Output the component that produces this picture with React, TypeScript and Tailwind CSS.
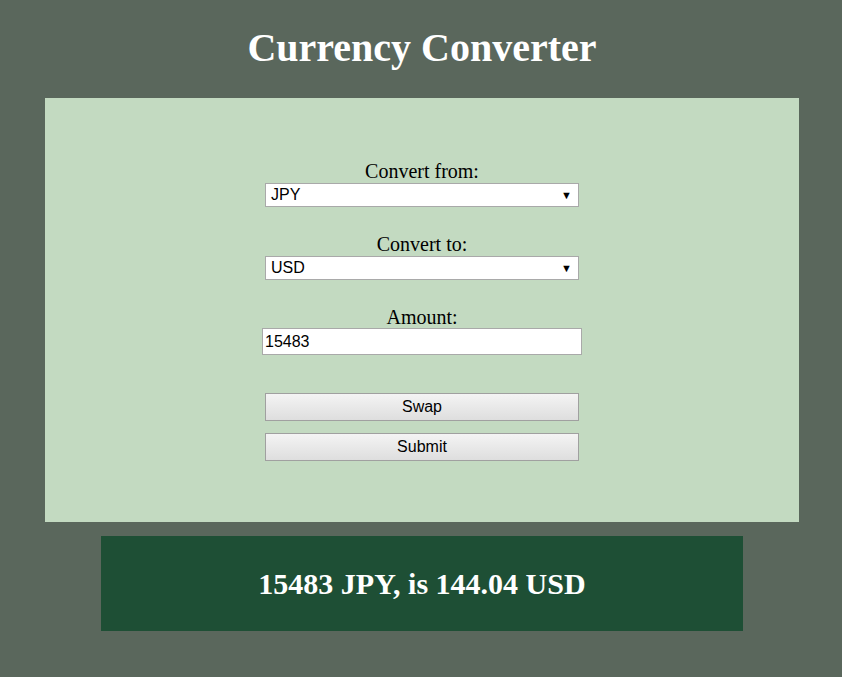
import React, { useState } from 'react';

export default function App() {
  const [from] = useState('JPY');
  const [to] = useState('USD');
  const [amount, setAmount] = useState('15483');

  return (
    <div className="min-h-[677px] bg-[#5a675c] pl-[2px] pt-[22px] pb-[46px]" style={{ fontFamily: '"Liberation Serif", serif' }}>
      <h1 className="text-center text-[40px] font-bold leading-[52px] text-white">Currency Converter</h1>

      <div className="mx-auto mt-[24px] h-[424px] w-[754px] bg-[#c3dac1] pt-[62px]">
        <div className="mx-auto flex w-[320px] flex-col items-center text-black">
          {/* Convert from */}
          <label className="text-[20px] leading-[22px]">Convert from:</label>
          <div className="mt-[1px] flex h-[24px] w-[314px] items-center justify-between border border-[#a9a9a9] bg-white pl-[5px] pr-[6px] text-[16px]" style={{ fontFamily: '"Liberation Sans", sans-serif' }}>
            <span>{from}</span>
            <span className="text-[11px]">▼</span>
          </div>

          {/* Convert to */}
          <label className="mt-[26px] text-[20px] leading-[22px]">Convert to:</label>
          <div className="mt-[1px] flex h-[24px] w-[314px] items-center justify-between border border-[#a9a9a9] bg-white pl-[5px] pr-[6px] text-[16px]" style={{ fontFamily: '"Liberation Sans", sans-serif' }}>
            <span>{to}</span>
            <span className="text-[11px]">▼</span>
          </div>

          {/* Amount */}
          <label className="mt-[26px] text-[20px] leading-[22px]">Amount:</label>
          <input
            value={amount}
            onChange={(e) => setAmount(e.target.value)}
            className="h-[27px] w-[320px] border border-[#a9a9a9] bg-white px-[2px] text-[16px] outline-none"
            style={{ fontFamily: '"Liberation Sans", sans-serif' }}
          />

          <button className="mt-[38px] h-[28px] w-[314px] border border-[#a0a0a0] bg-gradient-to-b from-[#f4f4f4] to-[#dedede] text-[16px]" style={{ fontFamily: '"Liberation Sans", sans-serif' }}>
            Swap
          </button>
          <button className="mt-[12px] h-[28px] w-[314px] border border-[#a0a0a0] bg-gradient-to-b from-[#f4f4f4] to-[#dedede] text-[16px]" style={{ fontFamily: '"Liberation Sans", sans-serif' }}>
            Submit
          </button>
        </div>
      </div>

      <div className="mx-auto mt-[14px] flex h-[95px] w-[642px] items-center justify-center bg-[#1e4f35]">
        <p className="text-[30px] font-bold text-white">15483 JPY, is 144.04 USD</p>
      </div>
    </div>
  );
}
